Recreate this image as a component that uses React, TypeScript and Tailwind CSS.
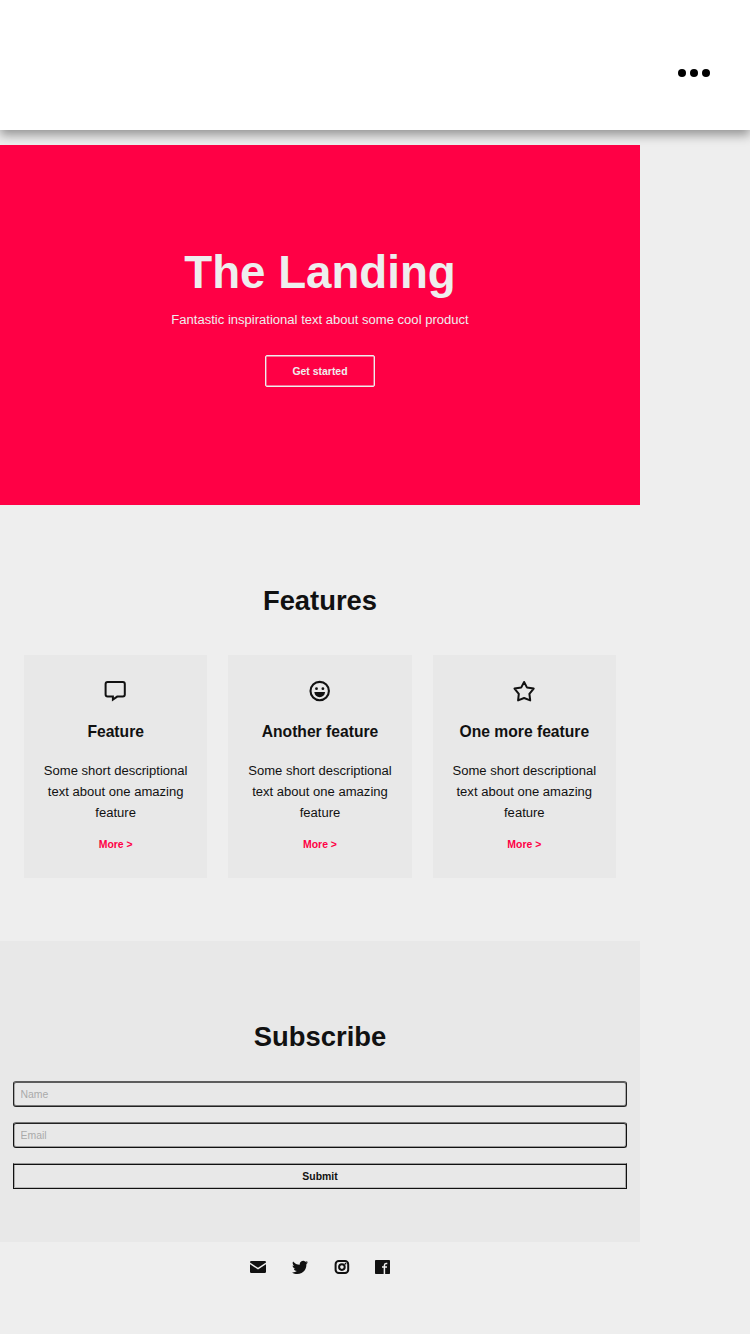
import React from "react";

const sans = "font-['Liberation_Sans',Arial,sans-serif]";

function CommentIcon() {
  return (
    <svg width="23" height="22" viewBox="0 0 23 22" fill="none" stroke="#111" strokeWidth="2" strokeLinejoin="miter">
      <path d="M3.6 2H18.8Q20.8 2 20.8 4V14.6Q20.8 16.6 18.8 16.6H13.2L8.9 19.6V16.6H3.6Q1.6 16.6 1.6 14.6V4Q1.6 2 3.6 2Z" />
    </svg>
  );
}

function SmileIcon() {
  return (
    <svg width="22" height="22" viewBox="0 0 22 22" fill="#111">
      <circle cx="10.7" cy="11.1" r="9.2" fill="none" stroke="#111" strokeWidth="2.1" />
      <circle cx="7.5" cy="8.7" r="1.4" />
      <circle cx="13.9" cy="8.7" r="1.4" />
      <path d="M5.3 12.1H16.1C15.8 15.3 13.6 17.2 10.7 17.2S5.6 15.3 5.3 12.1Z" />
    </svg>
  );
}

function StarIcon() {
  return (
    <svg width="24" height="22" viewBox="0 0 24 22" fill="none" stroke="#111" strokeWidth="2" strokeLinejoin="round">
      <path d="M12.1 2L14.9 7.4L21.7 8.6L17.4 13.9L18.2 20.4L12.1 18L6.1 20.4L6.8 13.9L2.5 8.6L9.3 7.4Z" />
    </svg>
  );
}

const features = [
  { title: "Feature", icon: <CommentIcon /> },
  { title: "Another feature", icon: <SmileIcon /> },
  { title: "One more feature", icon: <StarIcon /> },
];

export default function App() {
  return (
    <div className={`min-h-[1334px] w-[750px] overflow-hidden bg-[#eeeeee] text-[#111] ${sans}`}>
      <header className="relative flex h-[130px] items-start justify-end gap-1 bg-white pr-10 pt-[69px] shadow-[0_5px_10px_rgba(0,0,0,0.38)]">
        <span className="size-2 rounded-full bg-black" />
        <span className="size-2 rounded-full bg-black" />
        <span className="size-2 rounded-full bg-black" />
      </header>

      <main className="mt-[15px] w-[640px]">
        <section className="flex h-[360px] flex-col items-center bg-[#ff0045] text-[#eeeeee]">
          <h1 className="mt-[98px] text-[45.7px] leading-[60px] font-bold whitespace-nowrap">The Landing</h1>
          <p className="mt-[7px] text-[13.06px] leading-5 whitespace-nowrap">Fantastic inspirational text about some cool product</p>
          <button className="mt-[25px] h-8 w-[110px] rounded-[2px] border border-[#eeeeee] pt-0.5 text-[10.45px] font-bold shadow-[inset_0_0_0_0.4px_#eeeeee]">Get started</button>
        </section>

        <section className="flex h-[436px] flex-col items-center px-6">
          <h2 className="mt-[76px] text-[27.4px] leading-10 font-bold">Features</h2>
          <div className="mt-[34px] grid w-full grid-cols-3 gap-[21px]">
            {features.map(({ title, icon }) => (
              <article key={title} className="flex h-[223px] flex-col items-center bg-[#e8e8e8] text-center">
                <div className="mt-[25px] h-[22px]">{icon}</div>
                <h3 className="mt-[20px] text-[15.67px] leading-5 font-bold whitespace-nowrap">{title}</h3>
                <p className="mt-[18px] w-[152px] text-[13.06px] leading-[21px]">Some short descriptional text about one amazing feature</p>
                <a href="#" className="mt-[14px] text-[10.45px] leading-4 font-bold text-[#ff0045]">More &gt;</a>
              </article>
            ))}
          </div>
        </section>

        <section className="flex h-[301.4px] flex-col items-center bg-[#e8e8e8] px-[13px]">
          <h2 className="mt-[76px] text-[27.4px] leading-10 font-bold">Subscribe</h2>
          <form className="mt-[24px] flex w-full flex-col">
            <input placeholder="Name" className="h-[26px] w-full rounded-[3px] border border-[#222] border-t-[#5c5c5c] px-[6.5px] text-[10.45px] shadow-[inset_0_1px_0_#5c5c5c,inset_0_-1px_0_#777,inset_1px_0_0_#aaa,inset_-1px_0_0_#aaa] placeholder:text-[#aaaaaa]" />
            <input placeholder="Email" className="mt-[15px] h-[26px] w-full rounded-[3px] border border-[#111] border-t-[#777] px-[6.5px] text-[10.45px] shadow-[inset_0_1px_0_#222,inset_0_-1px_0_#999,inset_1px_0_0_#aaa,inset_-1px_0_0_#aaa] placeholder:text-[#aaaaaa]" />
            <button type="button" className="mt-[15px] h-[26px] w-full border border-[#111] border-t-[#999] pt-0.5 text-[10.45px] font-bold shadow-[inset_0_1px_0_#111,inset_0_-1px_0_#bbb,inset_1px_0_0_#aaa,inset_-1px_0_0_#aaa]">Submit</button>
          </form>
        </section>

        <footer className="flex justify-center pt-[17.6px]">
          <div className="flex h-4 items-start">
            <svg width="16" height="15" viewBox="0 0 16 15" fill="#111">
              <path d="M1.3 1H14.7Q16 1 16 2.2V2.5L8 7.8L0 2.5V2.2Q0 1 1.3 1Z" />
              <path d="M0 4.2L8 9.5L16 4.2V11.8Q16 13 14.7 13H1.3Q0 13 0 11.8Z" />
            </svg>
            <svg className="ml-[26px]" width="16" height="15" viewBox="0 0 16 15" fill="#111">
              <path d="M16 2.3C15.4 2.6 14.8 2.7 14.1 2.8C14.8 2.4 15.3 1.8 15.5 1C14.9 1.4 14.2 1.7 13.4 1.8A3.3 3.3 0 0 0 7.8 4.8C5.1 4.7 2.7 3.4 1.1 1.4C.2 2.9.7 4.8 2.1 5.8C1.6 5.8 1.1 5.6.6 5.4C.6 7 1.8 8.3 3.3 8.6C2.8 8.8 2.3 8.8 1.8 8.7C2.2 10 3.4 11 4.9 11C3.5 12.1 1.8 12.6 0 12.4C6 16.2 14.7 12.8 14.4 4C15 3.5 15.6 3 16 2.3Z" />
            </svg>
            <svg className="ml-[26px]" width="16" height="15" viewBox="0 0 16 15" fill="none" stroke="#111">
              <rect x="1.6" y="1" width="12.6" height="12" rx="3.2" strokeWidth="2" />
              <circle cx="7.9" cy="7.1" r="2.8" strokeWidth="2" />
              <circle cx="11.5" cy="3.7" r=".9" fill="#111" stroke="none" />
            </svg>
            <svg className="ml-[25px]" width="15" height="15" viewBox="0 0 15 15">
              <rect width="15" height="14" rx=".8" fill="#111" />
              <path d="M9.4 14V5.4Q9.4 3.6 11 3.6H12.3M7 7.1H12" fill="none" stroke="#eee" strokeWidth="1.5" />
            </svg>
          </div>
        </footer>
      </main>
    </div>
  );
}
